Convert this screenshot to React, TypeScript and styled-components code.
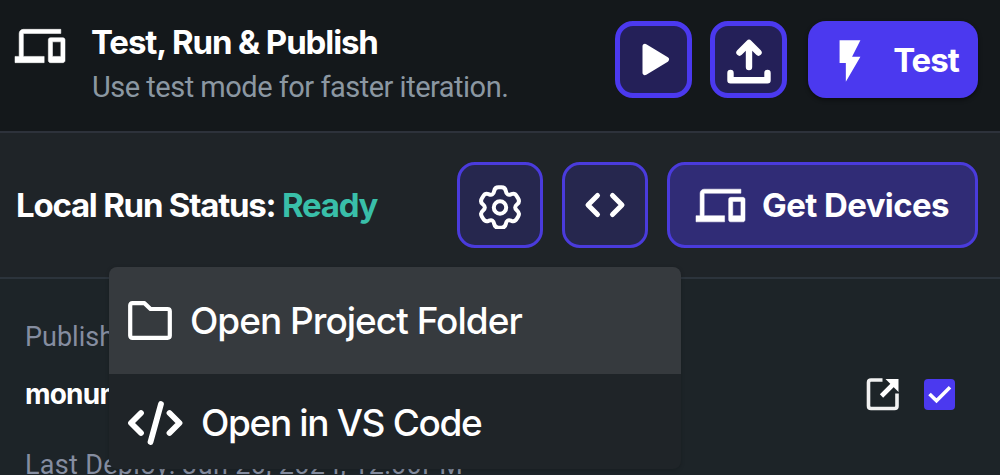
import React from 'react';
import styled, { createGlobalStyle } from 'styled-components';
import { MdDevices, MdFlashOn } from 'react-icons/md';

const GlobalStyle = createGlobalStyle`
  * {
    box-sizing: border-box;
  }

  body {
    margin: 0;
    background: #14181b;
    overflow: hidden;
  }
`;

type Point = [number, number];

// Six teeth around the origin, every corner rounded off
const buildGearPath = () => {
  const tooth: { p: Point; r: number }[] = [
    { p: [-5.2, -20.2], r: 3.8 },
    { p: [5.2, -20.2], r: 3.8 },
    { p: [6.7, -11.6], r: 4.6 }
  ];
  const corners: { p: Point; r: number }[] = [];
  for (let i = 0; i < 6; i++) {
    const a = (i * Math.PI) / 3;
    tooth.forEach(({ p: [x, y], r }) => {
      corners.push({
        p: [x * Math.cos(a) - y * Math.sin(a), x * Math.sin(a) + y * Math.cos(a)],
        r
      });
    });
  }
  const towards = (from: Point, to: Point, dist: number): string => {
    const len = Math.hypot(to[0] - from[0], to[1] - from[1]);
    const t = dist / len;
    return `${(from[0] + (to[0] - from[0]) * t).toFixed(2)} ${(from[1] + (to[1] - from[1]) * t).toFixed(2)}`;
  };
  const n = corners.length;
  const parts = corners.map(({ p, r }, i) => {
    const prev = corners[(i + n - 1) % n].p;
    const next = corners[(i + 1) % n].p;
    return `${i === 0 ? 'M' : 'L'}${towards(p, prev, r)}Q${p[0].toFixed(2)} ${p[1].toFixed(2)} ${towards(p, next, r)}`;
  });
  return `${parts.join('')}Z`;
};

const gearPath = buildGearPath();

const PlayIcon = () => (
  <svg width="36" height="40" viewBox="0 0 36 40">
    <path d="M9 6.300L30.500 19.500L9 32.700Z" fill="#fff" stroke="#fff" strokeWidth="5" strokeLinejoin="round" />
  </svg>
);

const UploadIcon = () => (
  <StrokeSvg width="46" height="48" viewBox="0 0 46 48" $weight={6.4}>
    <path d="M23 31V7.500M13.500 16.500L23 7L32.500 16.500" />
    <path d="M4.500 37V44.200H41.500V37" />
  </StrokeSvg>
);

const GearIcon = () => (
  <StrokeSvg width="48" height="48" viewBox="-24 -26.500 48 48" $weight={4}>
    <path d={gearPath} />
    <circle r="6.2" />
  </StrokeSvg>
);

const BracketsIcon = () => (
  <StrokeSvg width="44" height="28" viewBox="0 0 44 28" $weight={5}>
    <path d="M14.500 4.500L5 14L14.500 23.500M29.500 4.500L39 14L29.500 23.500" />
  </StrokeSvg>
);

const FolderIcon = () => (
  <StrokeSvg width="44" height="39" viewBox="0 0 44 39" $weight={4.2}>
    <path d="M4.500 2.200H16.500L22.500 8H39.500Q41.800 8 41.800 10.300V34.500Q41.800 36.800 39.500 36.800H4.500Q2.200 36.800 2.200 34.500V4.500Q2.200 2.200 4.500 2.200Z" />
  </StrokeSvg>
);

const CodeIcon = () => (
  <StrokeSvg width="55" height="44" viewBox="0 0 55 44" $weight={5.8}>
    <path d="M13 12L3 22L13 32M41.500 12L51.500 22L41.500 32M33 3L22.500 41" />
  </StrokeSvg>
);

const ExternalIcon = () => (
  <svg width="34" height="34" viewBox="0 0 34 34" fill="none" stroke="#f1f1f1" strokeWidth="3.6">
    <path d="M16.500 3H5Q2.500 3 2.500 5.500V29Q2.500 31.500 5 31.500H28.500Q31 31.500 31 29V16.500" />
    <path d="M15.500 19L27 7.500" stroke="#fff" strokeWidth="4.600" />
    <path d="M19.500 2H32.500V15Z" fill="#fff" stroke="none" />
  </svg>
);

const CheckIcon = () => (
  <svg width="31" height="31" viewBox="0 0 31 31" fill="none" stroke="#fff" strokeWidth="3.600">
    <path d="M5.500 15L12.500 21.800L26 8.200" />
  </svg>
);

const App: React.FC = () => {
  return (
    <Panel>
      <GlobalStyle />
      <Header>
        <HeaderIcon>
          <DevicesIcon size={50} />
        </HeaderIcon>
        <Heading>
          <Title>Test, Run &amp; Publish</Title>
          <Subtitle>Use test mode for faster iteration.</Subtitle>
        </Heading>
        <HeaderActions>
          <RunButton aria-label="Run">
            <PlayIcon />
          </RunButton>
          <RunButton aria-label="Publish">
            <UploadIcon />
          </RunButton>
          <TestButton>
            <MdFlashOn size={50} />
            <span>Test</span>
          </TestButton>
        </HeaderActions>
      </Header>

      <StatusBar>
        <StatusText>
          Local Run Status: <Ready>Ready</Ready>
        </StatusText>
        <StatusActions>
          <ToolButton aria-label="Settings">
            <GearIcon />
          </ToolButton>
          <ToolButton aria-label="Code">
            <BracketsIcon />
          </ToolButton>
          <DevicesButton>
            <DevicesIcon size={49} />
            <span>Get Devices</span>
          </DevicesButton>
        </StatusActions>
        <Menu>
          <MenuItem $active>
            <FolderIcon />
            <MenuLabel $spacing={-1}>Open Project Folder</MenuLabel>
          </MenuItem>
          <MenuItem>
            <CodeIcon />
            <MenuLabel $spacing={-1.35}>Open in VS Code</MenuLabel>
          </MenuItem>
        </Menu>
      </StatusBar>

      <Deployment>
        <Caption>Published URL</Caption>
        <UrlRow>
          <Url>monument</Url>
          <UrlActions>
            <ExternalIcon />
            <Checkbox>
              <CheckIcon />
            </Checkbox>
          </UrlActions>
        </UrlRow>
        <Caption $spacing={0.3}>Last Deploy: Jun 20, 2024, 12:00PM</Caption>
      </Deployment>
    </Panel>
  );
};

// Styled components
const Panel = styled.div`
  width: 1000px;
  height: 475px;
  overflow: hidden;
  display: flex;
  flex-direction: column;
  background: #1d2428;
  color: #fff;
  font-family: Inter, 'Liberation Sans', sans-serif;
  white-space: nowrap;
`;

const StrokeSvg = styled.svg<{ $weight: number }>`
  flex: none;
  fill: none;
  stroke: #fff;
  stroke-width: ${props => props.$weight};
  stroke-linecap: round;
  stroke-linejoin: round;
`;

// The icon's first path is its empty 24x24 frame, so only the last one is thickened
const DevicesIcon = styled(MdDevices)`
  display: block;
  overflow: visible;

  path:last-child {
    stroke: #fff;
    stroke-width: 0.25;
    stroke-linejoin: round;
  }
`;

const Header = styled.header`
  flex: none;
  display: flex;
  height: 133px;
  padding: 21px 22px 0 15px;
  background: #14181b;
  border-bottom: 2px solid #2d323b;
`;

const HeaderIcon = styled.div`
  width: 76px;
  height: 50px;
`;

const Heading = styled.div`
  display: flex;
  flex-direction: column;
`;

const Title = styled.h1`
  margin: 0;
  font-size: 33px;
  line-height: 42px;
  font-weight: 700;
  letter-spacing: -1.1px;
`;

const Subtitle = styled.p`
  margin: 3px 0 0 1px;
  color: #8b97a2;
  font-family: Roboto, sans-serif;
  font-size: 29px;
  line-height: 42px;
  letter-spacing: -0.5px;
`;

const HeaderActions = styled.div`
  display: flex;
  margin-left: auto;
`;

const Button = styled.button`
  display: flex;
  align-items: center;
  justify-content: center;
  padding: 0;
  color: #fff;
  font-family: inherit;
  font-weight: 700;

  svg {
    flex: none;
    display: block;
  }
`;

const RunButton = styled(Button)`
  width: 77px;
  height: 77px;
  margin-right: 18px;
  background: #242058;
  border: 5px solid #4b39ef;
  border-radius: 18px;
`;

const TestButton = styled(Button)`
  width: 170px;
  height: 77px;
  margin-left: 3px;
  padding-right: 2px;
  gap: 18px;
  background: #4b39ef;
  border: none;
  border-radius: 18px;
  font-size: 33px;
  letter-spacing: -1px;
  box-shadow: 0 2px 4px rgba(0, 0, 0, 0.45);

  svg {
    margin-top: 2px;
  }
`;

const StatusBar = styled.section`
  position: relative;
  flex: none;
  display: flex;
  height: 146px;
  padding: 29px 22px 0 16px;
  background: #1f2428;
  border-bottom: 2px solid #2c343c;
`;

const StatusText = styled.div`
  height: 86px;
  line-height: 86px;
  font-size: 33px;
  font-weight: 700;
  letter-spacing: -1.23px;
`;

const Ready = styled.span`
  color: #39bfa9;
`;

const StatusActions = styled.div`
  display: flex;
  gap: 19px;
  margin-left: auto;
`;

const ToolButton = styled(Button)`
  width: 86px;
  height: 86px;
  background: #26274e;
  border: 3px solid #4a3bdc;
  border-radius: 18px;
`;

const DevicesButton = styled(Button)`
  width: 311px;
  height: 86px;
  gap: 17px;
  background: #302c76;
  border: 3px solid #4a3bdc;
  border-radius: 18px;
  font-size: 33px;
  letter-spacing: -0.6px;
`;

const Menu = styled.div`
  position: absolute;
  left: 109px;
  top: 134px;
  z-index: 1;
  width: 572px;
  height: 202px;
  overflow: hidden;
  background: #1f2428;
  border-radius: 8px;
  box-shadow: 0 1px 4px rgba(0, 0, 0, 0.2);
`;

const MenuItem = styled.div<{ $active?: boolean }>`
  display: flex;
  align-items: center;
  gap: 18px;
  height: ${props => (props.$active ? 107 : 97)}px;
  padding-left: 19px;
  background: ${props => (props.$active ? '#363a3e' : 'transparent')};
`;

const MenuLabel = styled.span<{ $spacing: number }>`
  font-size: 37px;
  font-weight: 500;
  letter-spacing: ${props => props.$spacing}px;
`;

const Deployment = styled.section`
  display: flex;
  flex-direction: column;
  padding: 41px 45px 0 25px;
`;

const Caption = styled.div<{ $spacing?: number }>`
  color: #858da0;
  font-family: Roboto, sans-serif;
  font-size: 27px;
  line-height: 34px;
  letter-spacing: ${props => props.$spacing ?? 0}px;
`;

const UrlRow = styled.div`
  display: flex;
  align-items: center;
  height: 60px;
  margin: 10px 0 24px;
`;

const Url = styled.div`
  font-size: 28px;
  font-weight: 700;
  letter-spacing: -0.8px;
`;

const UrlActions = styled.div`
  display: flex;
  align-items: center;
  gap: 24px;
  margin-left: auto;
`;

const Checkbox = styled.div`
  width: 31px;
  height: 31px;
  background: #4b39ef;
  border-radius: 4px;
`;

export default App;
